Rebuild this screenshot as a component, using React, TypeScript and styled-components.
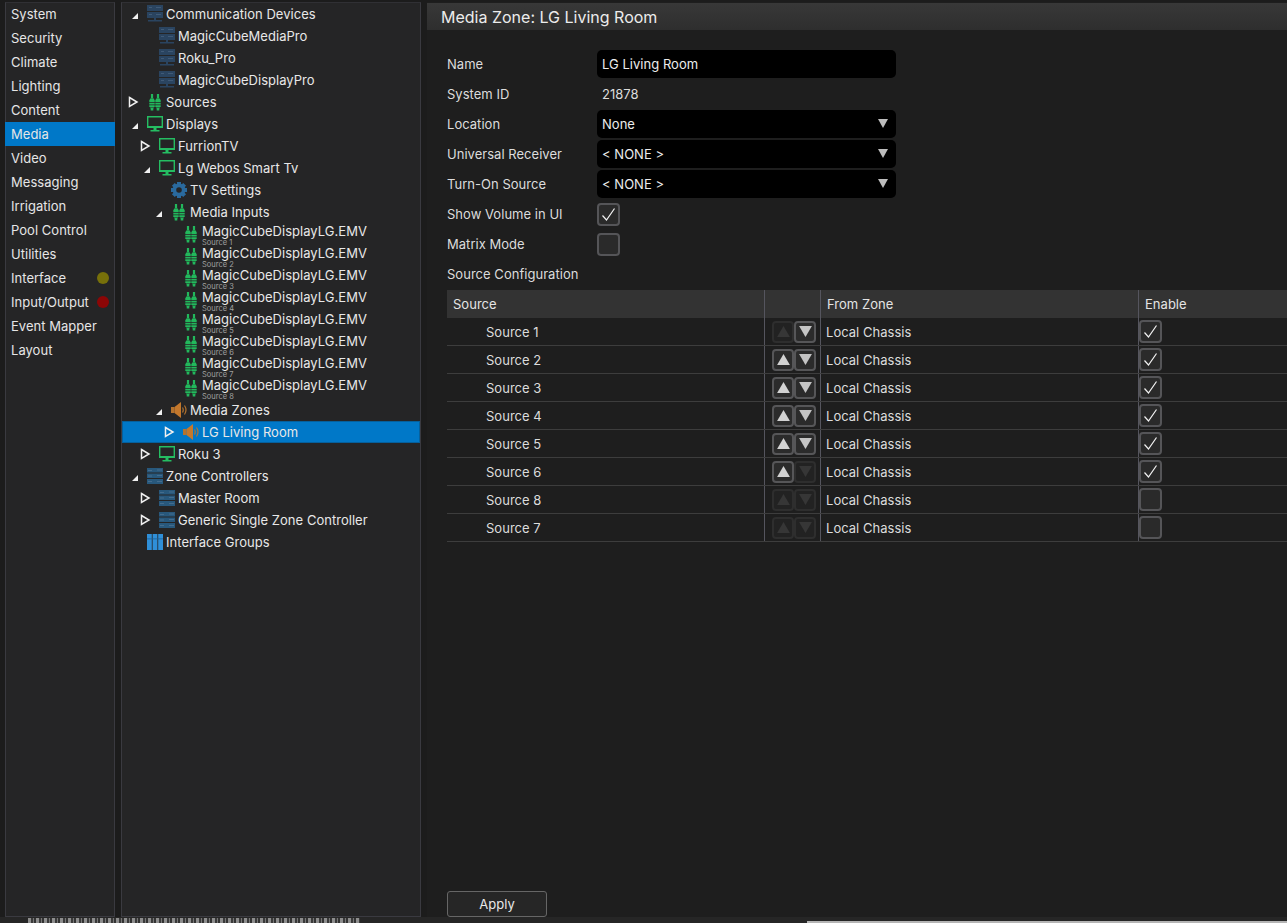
import React from "react";
import styled, { createGlobalStyle } from "styled-components";

const Global = createGlobalStyle`
  html, body { margin: 0; padding: 0; background: #141414; }
  * { box-sizing: border-box; }
  #root { width: 1287px; height: 923px; overflow: hidden; }
`;

const Shell = styled.div`
  width: 1287px;
  height: 923px;
  display: flex;
  flex-direction: column;
  font-family: Inter, "Noto Sans", sans-serif;
  font-size: 13px;
  letter-spacing: 0.03px;
  color: #e6e6e6;
  background: #1c1c1c;
`;
const Main = styled.div`
  flex: 1;
  min-height: 0;
  display: flex;
  gap: 6px;
  padding: 2px 0 0 5px;
`;
const Footer = styled.div`
  height: 6px;
  flex: none;
  background: #262626;
  display: flex;
  align-items: flex-start;
  padding-left: 28px;
  gap: 447px;
`;
const BehindText = styled.div`
  width: 332px;
  height: 5px;
  margin-top: 1px;
  background: repeating-linear-gradient(90deg, #8e8e8e 0 3px, #3a3a3a 3px 5px, #777 5px 6px, #333 6px 8px);
`;
const BehindEdge = styled.div`
  flex: 1;
  height: 2px;
  margin-top: 4px;
  background: #b5b5b5;
`;
const SidePanel = styled.nav`
  width: 110px;
  flex: none;
  background: #252526;
  border: 1px solid #3a3a40;
  border-top-color: #303034;
`;
const SideItem = styled.div<{ $active?: boolean }>`
  height: 24px;
  margin: 0 -1px;
  padding-left: 6px;
  padding-right: 6px;
  display: flex;
  align-items: center;
  justify-content: space-between;
  white-space: nowrap;
  background: ${(p) => (p.$active ? "#0078c8" : "transparent")};
  &:first-child {
    margin-top: -1px;
  }
`;
const Led = styled.span<{ $color: string }>`
  width: 12px;
  height: 12px;
  border-radius: 50%;
  background: ${(p) => p.$color};
  flex: none;
`;
const TreePanel = styled.div`
  width: 300px;
  flex: none;
  background: #252526;
  border: 1px solid #3a3a40;
  border-top-color: #303034;
`;
const TreeRow = styled.div<{ $level: number; $selected?: boolean }>`
  height: 22px;
  position: relative;
  display: flex;
  align-items: center;
  padding-left: ${(p) => p.$level * 12 + 25}px;
  white-space: nowrap;
  color: #e8e8e8;
  background: ${(p) => (p.$selected ? "#0078c8" : "transparent")};
  box-shadow: ${(p) => (p.$selected ? "inset 0 0 0 1px #06609c" : "none")};
`;
const Arrow = styled.svg<{ $level: number }>`
  position: absolute;
  left: ${(p) => p.$level * 12 + 5}px;
  top: 5px;
  width: 12px;
  height: 12px;
`;
const IconBox = styled.svg`
  width: 16px;
  height: 18px;
  flex: none;
  margin-right: 3px;
`;
const StackText = styled.div`
  display: flex;
  flex-direction: column;
  align-self: flex-start;
`;
const MainLabel = styled.span`
  line-height: 16px;
`;
const SubLabel = styled.span`
  font-size: 7.5px;
  line-height: 7px;
  letter-spacing: 0;
  color: #a0a0a0;
`;
const Content = styled.section`
  flex: 1;
  min-width: 0;
  display: flex;
  flex-direction: column;
  background: #1e1e1e;
`;
const TitleBar = styled.header`
  height: 27px;
  margin-top: 1px;
  padding-left: 14px;
  flex: none;
  display: flex;
  align-items: center;
  font-size: 16px;
  letter-spacing: 0;
  color: #ececec;
  background: linear-gradient(#383838, #2e2e2e);
`;
const Body = styled.div`
  flex: 1;
  display: flex;
  flex-direction: column;
  padding: 19px 0 0 20px;
`;
const FormRow = styled.div`
  height: 30px;
  display: grid;
  grid-template-columns: 150px 299px;
  align-items: center;
  flex: none;
`;
const FormLabel = styled.span`
  color: #dcdcdc;
`;
const Field = styled.div`
  height: 28px;
  border-radius: 5px;
  background: #000;
  color: #ececec;
  padding: 0 8px 0 5px;
  display: flex;
  align-items: center;
  justify-content: space-between;
`;
const Plain = styled.span`
  padding-left: 5px;
  color: #dcdcdc;
`;
const Caret = styled.svg`
  width: 10px;
  height: 9px;
  margin-top: -1px;
`;
const Box = styled.div`
  width: 23px;
  height: 23px;
  border: 2px solid #555558;
  border-radius: 4px;
  background: #2a2a2a;
  display: flex;
  align-items: center;
  justify-content: center;
`;
const Table = styled.div`
  margin-top: 1px;
  display: flex;
  flex-direction: column;
`;
const Cols = styled.div<{ $head?: boolean }>`
  height: 28px;
  display: grid;
  grid-template-columns: 317px 56px 318px 1fr;
  align-items: stretch;
  background: ${(p) => (p.$head ? "#333333" : "transparent")};
  border-bottom: ${(p) => (p.$head ? "none" : "1px solid #3d3d3d")};
`;
const HeadCell = styled.div<{ $first?: boolean }>`
  display: flex;
  align-items: center;
  padding-left: 6px;
  color: #e4e4e4;
  border-left: ${(p) => (p.$first ? "none" : "1px solid #55555e")};
`;
const Cell = styled.div<{ $indent?: number; $line?: boolean }>`
  display: flex;
  align-items: center;
  padding-left: ${(p) => p.$indent ?? 0}px;
  color: #dcdcdc;
  border-left: ${(p) => (p.$line ? "1px solid #55555e" : "none")};
`;
const Arrows = styled.div`
  display: flex;
  padding-left: 7px;
`;
const StepButton = styled.div<{ $on: boolean }>`
  width: 22px;
  height: 22px;
  border: 2px solid ${(p) => (p.$on ? "#565658" : "#2e2e2e")};
  border-radius: 4px;
  background: ${(p) => (p.$on ? "#2b2b2b" : "#222222")};
  display: flex;
  align-items: center;
  justify-content: center;
`;
const Spacer = styled.div`
  flex: 1;
`;
const ApplyButton = styled.div`
  width: 100px;
  height: 26px;
  flex: none;
  border: 1px solid #666;
  border-radius: 3px;
  background: #262626;
  color: #e8e8e8;
  display: flex;
  align-items: center;
  justify-content: center;
`;

const Rack = () => {
  const c = "#2a4460";
  return (
    <IconBox viewBox="0 0 16 18">
      <path d="M0 0h16v6H0zM0 7h16v6H0z" fill={c} />
      <path d="M2 2h3v1H2zM9 2h5v1H9zM2 9h3v1H2zM9 9h5v1H9z" fill="#5a7694" opacity=".45" />
      <path d="M7 13h2v2h6v1.500H1V15h6z" fill={c} />
    </IconBox>
  );
};
const Controller = () => (
  <IconBox viewBox="0 0 16 18">
    <path d="M0 1h16v4.600H0zM0 6.500h16v4.600H0zM0 12h16v5H0z" fill="#28587c" />
    <path d="M1 3h4v1H1zM10 2.500h5v1h-5zM1 8.500h4v1H1zM10 8h5v1h-5zM1 14h4v1H1zM10 14h5v1h-5z" fill="#6d8da8" opacity=".4" />
  </IconBox>
);
const PlugShape = ({ x }: { x: number }) => (
  <g transform={`translate(${x} 0)`} fill="#22b85c">
    <path d="M1.600 1h2.200v4.500H1.600z" />
    <path d="M.9 5.500h3.600L5.400 7.500v1.500H0V7.500z" />
    <path d="M0 9.800h5.400v1.800H0zM0 12.300h5.400v1.700H0z" />
    <path d="M.7 14.600h4L4 15.800v1.700H1.400v-1.700z" />
  </g>
);
const Plugs = () => (
  <IconBox viewBox="0 0 16 18">
    <PlugShape x={2.3} />
    <PlugShape x={8.3} />
  </IconBox>
);
const Monitor = () => (
  <IconBox viewBox="0 0 16 18">
    <path d="M.7 1.700h14.600v10.600H.7z" fill="none" stroke="#25bd62" strokeWidth="1.400" />
    <path d="M0 11h16v2H0zM6.500 13h3v2h3v1.500h-9V15h3z" fill="#25bd62" />
  </IconBox>
);
const Gear = () => (
  <IconBox viewBox="0 0 16 18">
    <g transform="translate(8 9)" fill="#2a6a9e">
      {[0, 45, 90, 135, 180, 225, 270, 315].map((a) => (
        <rect key={a} x="-2" y="-8" width="4" height="4" transform={`rotate(${a})`} />
      ))}
      <path fillRule="evenodd" d="M0-6.500a6.500 6.500 0 1 0 0 13a6.500 6.500 0 1 0 0-13zM0-2.800a2.800 2.800 0 1 1 0 5.600a2.800 2.800 0 1 1 0-5.600z" />
    </g>
  </IconBox>
);
const Speaker = () => (
  <IconBox viewBox="0 0 16 18">
    <path d="M0 6h3.500v6H0z" fill="#b5732e" />
    <path d="M3.500 6 10 1v16l-6.500-5z" fill="#c4782c" />
    <path d="M11.500 6.500q1.500 2.500 0 5M13.500 4.500q3 4.500 0 9" fill="none" stroke="#b5732e" strokeWidth="1.200" />
  </IconBox>
);
const Columns = () => (
  <IconBox viewBox="0 0 16 18">
    <path d="M0 1h4.800v16H0zM5.600 1h4.800v16H5.600zM11.200 1H16v16h-4.800z" fill="#2f8fd8" />
    <path d="M0 5.500h16v.8H0z" fill="#1d5f96" />
  </IconBox>
);

type IconKind = "dim" | "rack" | "plug" | "mon" | "gear" | "spk" | "cols";
const icons: Record<IconKind, React.ReactNode> = {
  dim: <Rack />,
  rack: <Controller />,
  plug: <Plugs />,
  mon: <Monitor />,
  gear: <Gear />,
  spk: <Speaker />,
  cols: <Columns />,
};

type Node = { level: number; icon: IconKind; text: string; arrow?: "open" | "closed"; sub?: string; selected?: boolean };
const tree: Node[] = [
  { level: 0, icon: "dim", text: "Communication Devices", arrow: "open" },
  { level: 1, icon: "dim", text: "MagicCubeMediaPro" },
  { level: 1, icon: "dim", text: "Roku_Pro" },
  { level: 1, icon: "dim", text: "MagicCubeDisplayPro" },
  { level: 0, icon: "plug", text: "Sources", arrow: "closed" },
  { level: 0, icon: "mon", text: "Displays", arrow: "open" },
  { level: 1, icon: "mon", text: "FurrionTV", arrow: "closed" },
  { level: 1, icon: "mon", text: "Lg Webos Smart Tv", arrow: "open" },
  { level: 2, icon: "gear", text: "TV Settings" },
  { level: 2, icon: "plug", text: "Media Inputs", arrow: "open" },
  ...[1, 2, 3, 4, 5, 6, 7, 8].map((n) => ({
    level: 3,
    icon: "plug" as IconKind,
    text: "MagicCubeDisplayLG.EMV",
    sub: `Source ${n}`,
  })),
  { level: 2, icon: "spk", text: "Media Zones", arrow: "open" },
  { level: 3, icon: "spk", text: "LG Living Room", arrow: "closed", selected: true },
  { level: 1, icon: "mon", text: "Roku 3", arrow: "closed" },
  { level: 0, icon: "rack", text: "Zone Controllers", arrow: "open" },
  { level: 1, icon: "rack", text: "Master Room", arrow: "closed" },
  { level: 1, icon: "rack", text: "Generic Single Zone Controller", arrow: "closed" },
  { level: 0, icon: "cols", text: "Interface Groups" },
];

const sideItems: { t: string; led?: string }[] = [
  { t: "System" }, { t: "Security" }, { t: "Climate" }, { t: "Lighting" }, { t: "Content" },
  { t: "Media" }, { t: "Video" }, { t: "Messaging" }, { t: "Irrigation" }, { t: "Pool Control" },
  { t: "Utilities" }, { t: "Interface", led: "#77700a" }, { t: "Input/Output", led: "#8c0606" },
  { t: "Event Mapper" }, { t: "Layout" },
];

const sources = [
  { n: "Source 1", up: false, down: true, on: true },
  { n: "Source 2", up: true, down: true, on: true },
  { n: "Source 3", up: true, down: true, on: true },
  { n: "Source 4", up: true, down: true, on: true },
  { n: "Source 5", up: true, down: true, on: true },
  { n: "Source 6", up: true, down: false, on: true },
  { n: "Source 8", up: false, down: false, on: false },
  { n: "Source 7", up: false, down: false, on: false },
];

const Check = () => (
  <svg width="17" height="17" viewBox="0 0 17 17">
    <path d="M2.500 9.500 6.500 14 14.500 2.500" fill="none" stroke="#f2f2f2" strokeWidth="1.200" />
  </svg>
);
const Tick = ({ dir, on }: { dir: "up" | "down"; on: boolean }) => (
  <svg width="13" height="11" viewBox="0 0 14 12">
    <path d={dir === "up" ? "M7 0 14 12H0z" : "M0 0h14L7 12z"} fill={on ? (dir === "up" ? "#d2d2d2" : "#c4c4c4") : "#363636"} />
  </svg>
);
const Combo = ({ text }: { text: string }) => (
  <Field>
    {text}
    <Caret viewBox="0 0 12 10" preserveAspectRatio="none">
      <path d="M0 0h12L6 10z" fill="#bdbdbd" />
    </Caret>
  </Field>
);

export default function App() {
  return (
    <Shell>
      <Global />
      <Main>
        <SidePanel>
          {sideItems.map((s) => (
            <SideItem key={s.t} $active={s.t === "Media"}>
              {s.t}
              {s.led && <Led $color={s.led} />}
            </SideItem>
          ))}
        </SidePanel>
        <TreePanel>
          {tree.map((n, i) => (
            <TreeRow key={i} $level={n.level} $selected={n.selected}>
              {n.arrow === "open" && (
                <Arrow $level={n.level} viewBox="0 0 12 12">
                  <path d="M11 5v6H5z" fill="#f0f0f0" />
                </Arrow>
              )}
              {n.arrow === "closed" && (
                <Arrow $level={n.level} viewBox="0 0 12 12">
                  <path d="M2.500 1.500 10 6 2.500 10.500z" fill="none" stroke="#f0f0f0" strokeWidth="1.500" />
                </Arrow>
              )}
              {icons[n.icon]}
              {n.sub ? (
                <StackText>
                  <MainLabel>{n.text}</MainLabel>
                  <SubLabel>{n.sub}</SubLabel>
                </StackText>
              ) : (
                n.text
              )}
            </TreeRow>
          ))}
        </TreePanel>
        <Content>
          <TitleBar>Media Zone: LG Living Room</TitleBar>
          <Body>
            <FormRow>
              <FormLabel>Name</FormLabel>
              <Field>LG Living Room</Field>
            </FormRow>
            <FormRow>
              <FormLabel>System ID</FormLabel>
              <Plain>21878</Plain>
            </FormRow>
            <FormRow>
              <FormLabel>Location</FormLabel>
              <Combo text="None" />
            </FormRow>
            <FormRow>
              <FormLabel>Universal Receiver</FormLabel>
              <Combo text="< NONE >" />
            </FormRow>
            <FormRow>
              <FormLabel>Turn-On Source</FormLabel>
              <Combo text="< NONE >" />
            </FormRow>
            <FormRow>
              <FormLabel>Show Volume in UI</FormLabel>
              <Box><Check /></Box>
            </FormRow>
            <FormRow>
              <FormLabel>Matrix Mode</FormLabel>
              <Box />
            </FormRow>
            <FormRow>
              <FormLabel>Source Configuration</FormLabel>
            </FormRow>
            <Table>
              <Cols $head>
                <HeadCell $first>Source</HeadCell>
                <HeadCell />
                <HeadCell>From Zone</HeadCell>
                <HeadCell>Enable</HeadCell>
              </Cols>
              {sources.map((s) => (
                <Cols key={s.n}>
                  <Cell $indent={39}>{s.n}</Cell>
                  <Cell $line>
                    <Arrows>
                      <StepButton $on={s.up}><Tick dir="up" on={s.up} /></StepButton>
                      <StepButton $on={s.down}><Tick dir="down" on={s.down} /></StepButton>
                    </Arrows>
                  </Cell>
                  <Cell $line $indent={5}>Local Chassis</Cell>
                  <Cell $line>
                    <Box>{s.on && <Check />}</Box>
                  </Cell>
                </Cols>
              ))}
            </Table>
            <Spacer />
            <ApplyButton>Apply</ApplyButton>
          </Body>
        </Content>
      </Main>
      <Footer>
        <BehindText />
        <BehindEdge />
      </Footer>
    </Shell>
  );
}
